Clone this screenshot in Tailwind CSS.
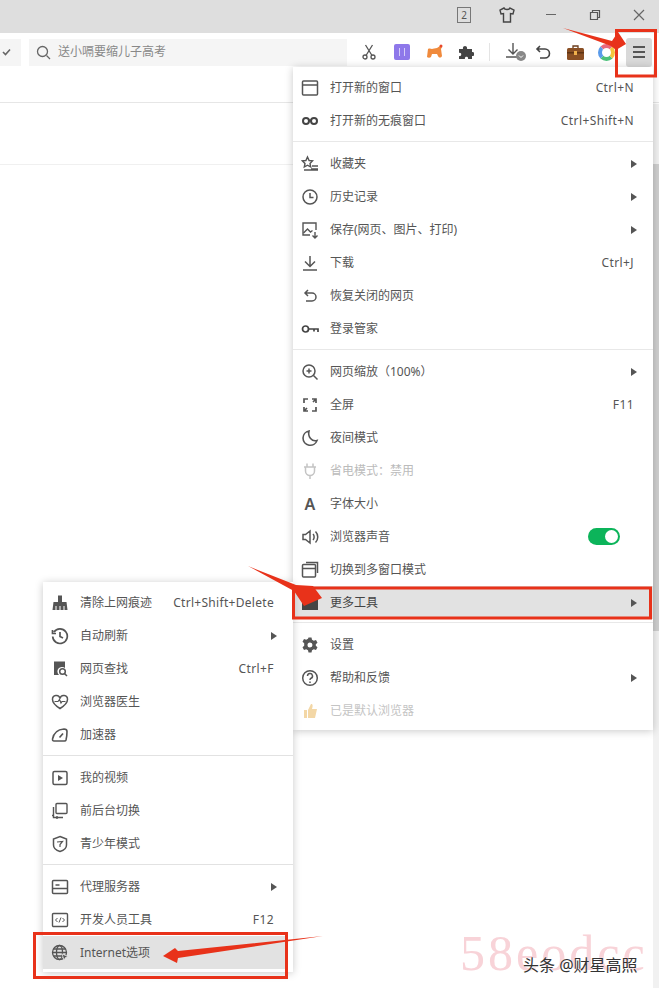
<!DOCTYPE html>
<html lang="zh-CN">
<head>
    <meta charset="UTF-8">
    <meta name="viewport" content="width=device-width, initial-scale=1.0">
    <title>浏览器菜单</title>
    <script src="https://cdn.jsdelivr.net/npm/@tailwindcss/browser@4"></script>
</head>
<body class="bg-white font-['Noto_Sans','Noto_Sans_CJK_SC',sans-serif] text-[12px] text-[#555]">
<div class="relative w-[659px] h-[988px] overflow-hidden">

    <!-- title bar -->
    <header class="h-[33px] bg-[#dedede] flex items-center justify-end pb-[4px] text-[#555]">
        <div class="w-[14px] h-[16px] border border-[#777] text-[10px] leading-[14px] text-center mr-[27px]">2</div>
        <svg class="w-[18px] h-[18px] mr-[30px]" viewBox="0 0 18 18" fill="none" stroke="#444" stroke-width="1.4"><path d="M6 2 2 4l1 4 2.500-.5V16h7V7.500L15 8l1-4-4-2c-.5 2-5.500 2-6 0z"/></svg>
        <div class="w-[10px] h-[1.500px] bg-[#666] mr-[33px]"></div>
        <svg class="w-[12px] h-[12px] mr-[32px]" viewBox="0 0 12 12" fill="none" stroke="#555" stroke-width="1.200"><path d="M1.500 3.500h7v7h-7zM3.500 3.500v-2h7v7h-2"/></svg>
        <svg class="w-[12px] h-[12px] mr-[14px]" viewBox="0 0 12 12" fill="none" stroke="#666" stroke-width="1.200"><path d="m1 1 10 10M11 1 1 11"/></svg>
    </header>

    <!-- toolbar -->
    <div class="h-[37px] flex items-center pt-[1px]">
        <div class="w-[21px] h-[27px] bg-[#f5f5f5] flex items-center justify-end pr-[10px]">
            <svg class="w-[9px] h-[8px]" viewBox="0 0 9 8" fill="none" stroke="#666" stroke-width="1.600"><path d="m1 4 2.500 2.500L8 1.500"/></svg>
        </div>
        <div class="ml-[8px] w-[318px] h-[27px] bg-[#f5f5f5] flex items-center pl-[7px] text-[#888]">
            <svg class="w-[15px] h-[15px] mr-[7px]" viewBox="0 0 15 15" fill="none" stroke="#666" stroke-width="1.300"><circle cx="6.500" cy="6.500" r="5"/><path d="m10.500 10.500 3.500 3.500"/></svg>
            送小嗝要缩儿子高考
        </div>
        <svg class="ml-[14px] w-[16px] h-[16px]" viewBox="0 0 16 16" fill="none" stroke="#555" stroke-width="1.300"><circle cx="4" cy="13" r="2"/><circle cx="12" cy="13" r="2"/><path d="M5 11.500 11.500 1M11 11.500 4.500 1"/></svg>
        <div class="ml-[17px] w-[16px] h-[16px] rounded-[2px] bg-[#8e78ea] flex items-center justify-center">
            <div class="w-[6px] h-[8px] border-x border-[#d5cdf8]"></div>
        </div>
        <svg class="ml-[16px] w-[17px] h-[16px]" viewBox="0 0 17 16"><path d="M1 13 2 5c2-1 3 0 4 0s3-1 5-1l3-2 2 1-1 2 1 7c-1 2-3 2-4 0l-1-2H6l-1 3c-1 1-3 1-4 0z" fill="#f08a3c"/><circle cx="15" cy="2" r="1.500" fill="#e8482c"/></svg>
        <svg class="ml-[15px] w-[16px] h-[16px]" viewBox="0 0 16 16"><path d="M1 5h4c-1-4 5-4 4 0h5v3c3-1 3 5 0 4v3h-4c1-3-4-3-3 0H1v-3c3 1 3-4 0-3z" fill="#444"/></svg>
        <div class="ml-[15px] w-px h-[18px] bg-[#e4e4e4]"></div>
        <svg class="ml-[15px] w-[22px] h-[20px]" viewBox="0 0 22 20" fill="none" stroke="#555" stroke-width="1.400"><path d="M8 1v11M3.500 7.500 8 12l4.500-4.500M1 15h11"/><circle cx="16" cy="14" r="5" fill="#888" stroke="none"/><path d="m14 13.500 2 2 2-2" stroke="#fff" stroke-width="1"/></svg>
        <svg class="ml-[8px] w-[16px] h-[14px]" viewBox="0 0 16 14" fill="none" stroke="#444" stroke-width="1.600"><path d="M5 1 2 4l3 3M2 4h8a4 4 0 0 1 0 9H5"/></svg>
        <svg class="ml-[16px] w-[17px] h-[15px]" viewBox="0 0 17 15"><path d="M6 3V1h5v2" fill="none" stroke="#6b3d1c" stroke-width="1.300"/><rect y="3" width="17" height="12" rx="1.500" fill="#8a4f24"/><rect y="7" width="17" height="1.500" fill="#5f3414"/><rect x="7" y="6" width="3" height="4" fill="#f0b04c"/></svg>
        <div class="ml-[14px] w-[17px] h-[17px] rounded-full border-[4px] border-t-[#e9677e] border-r-[#f4c63c] border-b-[#4cc17a] border-l-[#5a9bea]"></div>
        <div class="ml-[11px] w-[26px] h-[29px] rounded-[3px] bg-[#d9d9d9] flex flex-col items-center justify-center gap-[3px]">
            <div class="w-[12px] h-[2px] bg-[#555]"></div>
            <div class="w-[12px] h-[2px] bg-[#555]"></div>
            <div class="w-[12px] h-[2px] bg-[#555]"></div>
        </div>
    </div>

    <!-- page behind the menus -->
    <div class="h-[33px] border-b border-[#e6e6e6]"></div>
    <div class="h-[62px] border-b border-[#f0f0f0]"></div>

    <!-- scrollbar -->
    <div class="absolute right-0 top-[104px] bottom-0 w-[6px] bg-[#f1f1f1]">
        <div class="mt-[60px] h-[467px] bg-[#cfcfcf]"></div>
    </div>

    <!-- main menu -->
    <div class="absolute left-[293px] top-[67px] w-[360px] h-[663px] bg-white pt-[4px] shadow-[0_1px_8px_rgba(0,0,0,0.22)]">
        <div class="h-[33px] flex items-center pl-[8px] pr-[19px]">
            <svg class="w-[18px] h-[18px] mr-[11px]" viewBox="0 0 18 18" fill="none" stroke="#555" stroke-width="1.500"><rect x="1.500" y="2" width="15" height="14" rx="1"/><path d="M1.500 6h15"/></svg>
            <span>打开新的窗口</span><span class="ml-auto tracking-[0.4px]">Ctrl+N</span>
        </div>
        <div class="h-[33px] flex items-center pl-[8px] pr-[19px]">
            <svg class="w-[18px] h-[18px] mr-[11px]" viewBox="0 0 18 18" fill="none" stroke="#444" stroke-width="2"><circle cx="5" cy="9" r="3"/><circle cx="13" cy="9" r="3"/><path d="M8 8.500h2"/></svg>
            <span>打开新的无痕窗口</span><span class="ml-auto tracking-[0.4px]">Ctrl+Shift+N</span>
        </div>
        <div class="mt-[4px] mb-[5px] h-px bg-[#e8e8e8]"></div>

        <div class="h-[33px] flex items-center pl-[8px] pr-[19px]">
            <svg class="w-[18px] h-[18px] mr-[11px]" viewBox="0 0 18 18" fill="none" stroke="#555" stroke-width="1.400"><path d="m6.500 2 1.600 3.500 3.400.4-2.500 2.500.7 3.600-3.200-1.800-3.200 1.800.7-3.600L1.500 5.900l3.400-.4zM11 11h6M10 14h7M3 15h14"/></svg>
            <span>收藏夹</span>
            <svg class="ml-auto w-[6px] h-[8px] mr-[-3px]" viewBox="0 0 6 8"><path d="M0 0l6 4-6 4z" fill="#555"/></svg>
        </div>
        <div class="h-[33px] flex items-center pl-[8px] pr-[19px]">
            <svg class="w-[18px] h-[18px] mr-[11px]" viewBox="0 0 18 18" fill="none" stroke="#555" stroke-width="1.500"><circle cx="9" cy="9" r="7"/><path d="M9 5v4.500h3.500"/></svg>
            <span>历史记录</span>
            <svg class="ml-auto w-[6px] h-[8px] mr-[-3px]" viewBox="0 0 6 8"><path d="M0 0l6 4-6 4z" fill="#555"/></svg>
        </div>
        <div class="h-[33px] flex items-center pl-[8px] pr-[19px]">
            <svg class="w-[18px] h-[18px] mr-[11px]" viewBox="0 0 18 18" fill="none" stroke="#555" stroke-width="1.400"><path d="M9 14H2V2h13v7"/><path d="m2.500 12 4-4 3 3 2-1.500"/><path d="M14 11v6M11.500 14.500 14 17l2.500-2.500"/></svg>
            <span>保存(网页、图片、打印)</span>
            <svg class="ml-auto w-[6px] h-[8px] mr-[-3px]" viewBox="0 0 6 8"><path d="M0 0l6 4-6 4z" fill="#555"/></svg>
        </div>
        <div class="h-[33px] flex items-center pl-[8px] pr-[19px]">
            <svg class="w-[18px] h-[18px] mr-[11px]" viewBox="0 0 18 18" fill="none" stroke="#555" stroke-width="1.500"><path d="M9 2v10M4 7.500 9 12.500l5-5M2 16h14"/></svg>
            <span>下载</span><span class="ml-auto tracking-[0.4px]">Ctrl+J</span>
        </div>
        <div class="h-[33px] flex items-center pl-[8px] pr-[19px]">
            <svg class="w-[18px] h-[18px] mr-[11px]" viewBox="0 0 18 18" fill="none" stroke="#555" stroke-width="1.500"><path d="M7 3 4 6l3 3M4 6h7a3.800 3.800 0 0 1 0 8H5"/></svg>
            <span>恢复关闭的网页</span>
        </div>
        <div class="h-[33px] flex items-center pl-[8px] pr-[19px]">
            <svg class="w-[18px] h-[18px] mr-[11px]" viewBox="0 0 18 18" fill="none" stroke="#444" stroke-width="1.700"><circle cx="4.500" cy="9" r="3"/><path d="M7.500 9H17v3M13 9v2.500"/></svg>
            <span>登录管家</span>
        </div>
        <div class="mt-[4px] mb-[5px] h-px bg-[#e8e8e8]"></div>

        <div class="h-[33px] flex items-center pl-[8px] pr-[19px]">
            <svg class="w-[18px] h-[18px] mr-[11px]" viewBox="0 0 18 18" fill="none" stroke="#555" stroke-width="1.500"><circle cx="8" cy="8" r="6"/><path d="m12.500 12.500 4 4M5.500 8h5M8 5.500v5"/></svg>
            <span>网页缩放（100%）</span>
            <svg class="ml-auto w-[6px] h-[8px] mr-[-3px]" viewBox="0 0 6 8"><path d="M0 0l6 4-6 4z" fill="#555"/></svg>
        </div>
        <div class="h-[33px] flex items-center pl-[8px] pr-[19px]">
            <svg class="w-[18px] h-[18px] mr-[11px]" viewBox="0 0 18 18" fill="none" stroke="#555" stroke-width="1.700"><path d="M3 7V3h4M11 3h4v4M15 11v4h-4M7 15H3v-4M12 6l2.500-2.500M6 12l-2.500 2.500"/></svg>
            <span>全屏</span><span class="ml-auto tracking-[0.4px]">F11</span>
        </div>
        <div class="h-[33px] flex items-center pl-[8px] pr-[19px]">
            <svg class="w-[18px] h-[18px] mr-[11px]" viewBox="0 0 18 18" fill="none" stroke="#555" stroke-width="1.600"><path d="M8 2a7.200 7.200 0 1 0 8 9.500C11 13 6.500 8 8 2z"/></svg>
            <span>夜间模式</span>
        </div>
        <div class="h-[33px] flex items-center pl-[8px] pr-[19px] text-[#bbb]">
            <svg class="w-[18px] h-[18px] mr-[11px]" viewBox="0 0 18 18" fill="none" stroke="#c4c4c4" stroke-width="1.500"><path d="M3 5h12M6 1.500V5M12 1.500V5M4.500 5v4a4.500 4.500 0 0 0 9 0V5M9 13.500V17"/></svg>
            <span>省电模式：禁用</span>
        </div>
        <div class="h-[33px] flex items-center pl-[8px] pr-[19px]">
            <span class="w-[18px] mr-[11px] text-center text-[16px] font-semibold leading-none">A</span>
            <span>字体大小</span>
        </div>
        <div class="h-[33px] flex items-center pl-[8px] pr-[19px]">
            <svg class="w-[18px] h-[18px] mr-[11px]" viewBox="0 0 18 18" fill="none" stroke="#555" stroke-width="1.500"><path d="M2 6.500v5h2.500L9 15V3L4.500 6.500zM12 6c1.500 1.500 1.500 4.500 0 6M14.500 3.500c3 3 3 8 0 11"/></svg>
            <span>浏览器声音</span>
            <div class="ml-auto mr-[14px] w-[32px] h-[17px] rounded-full bg-[#0cb45a] flex items-center justify-end pr-[2px]">
                <div class="w-[13px] h-[13px] rounded-full bg-white"></div>
            </div>
        </div>
        <div class="h-[33px] flex items-center pl-[8px] pr-[19px]">
            <svg class="w-[18px] h-[18px] mr-[11px]" viewBox="0 0 18 18" fill="none" stroke="#555" stroke-width="1.500"><rect x="1.500" y="3.500" width="13" height="12.500" rx="1"/><path d="M1.500 7.500h13M5 1.500h11.500V12"/></svg>
            <span>切换到多窗口模式</span>
        </div>
        <div class="h-[33px] flex items-center pl-[8px] pr-[19px] bg-[#e2e2e2] text-[#444]">
            <svg class="w-[18px] h-[18px] mr-[11px]" viewBox="0 0 18 18"><path d="M1 3h6l2 2h8v11H1z" fill="#444"/></svg>
            <span>更多工具</span>
            <svg class="ml-auto w-[6px] h-[8px] mr-[-3px]" viewBox="0 0 6 8"><path d="M0 0l6 4-6 4z" fill="#555"/></svg>
        </div>
        <div class="mt-[3px] mb-[5px] h-px bg-[#e8e8e8]"></div>

        <div class="h-[33px] flex items-center pl-[8px] pr-[19px]">
            <svg class="w-[18px] h-[18px] mr-[11px]" viewBox="0 0 18 18"><path fill-rule="evenodd" d="m7.500 1.500h3l.5 2.300 1.800 1 2.200-.7 1.500 2.600-1.700 1.600v1.400l1.700 1.600-1.500 2.600-2.200-.7-1.800 1-.5 2.300h-3l-.5-2.300-1.800-1-2.200.7-1.500-2.600 1.700-1.600V7.300L1.500 5.700 3 3.100l2.200.7 1.800-1zM9 6.500a2.500 2.500 0 1 0 0 5 2.500 2.500 0 0 0 0-5z" fill="#555"/></svg>
            <span>设置</span>
        </div>
        <div class="h-[33px] flex items-center pl-[8px] pr-[19px]">
            <svg class="w-[18px] h-[18px] mr-[11px]" viewBox="0 0 18 18" fill="none" stroke="#555" stroke-width="1.500"><circle cx="9" cy="9" r="7.300"/><path d="M6.500 7a2.500 2.500 0 1 1 3.500 2.300c-.7.300-1 .8-1 1.700M9 12.500v1.500"/></svg>
            <span>帮助和反馈</span>
            <svg class="ml-auto w-[6px] h-[8px] mr-[-3px]" viewBox="0 0 6 8"><path d="M0 0l6 4-6 4z" fill="#555"/></svg>
        </div>
        <div class="h-[33px] flex items-center pl-[8px] pr-[19px] text-[#c4c4c4]">
            <svg class="w-[18px] h-[18px] mr-[11px]" viewBox="0 0 18 18"><path d="M3 8h3v8H3zM7 8l3-6c2 0 2 2 1 5h5l-2 9H7z" fill="#f3d7a6"/></svg>
            <span>已是默认浏览器</span>
        </div>
    </div>

    <!-- sub menu -->
    <div class="absolute left-[43px] top-[582px] w-[250px] h-[390px] bg-white pt-[4px] shadow-[0_1px_8px_rgba(0,0,0,0.22)]">
        <div class="h-[33px] flex items-center pl-[8px] pr-[19px]">
            <svg class="w-[18px] h-[18px] mr-[11px]" viewBox="0 0 18 18"><path d="M7 1.500h4V8h4.500l1 8h-15l1-8H7z" fill="#555"/><path d="M5 12v4M9 12v4M13 12v4" stroke="#fff" stroke-width="1"/></svg>
            <span>清除上网痕迹</span><span class="ml-auto tracking-[0.3px]">Ctrl+Shift+Delete</span>
        </div>
        <div class="h-[33px] flex items-center pl-[8px] pr-[19px]">
            <svg class="w-[18px] h-[18px] mr-[11px]" viewBox="0 0 18 18" fill="none" stroke="#555" stroke-width="1.700"><path d="M3 5a7.300 7.300 0 1 1-1.300 4.500M1.500 3v3.500H5M9 5v4.500l3 1.500"/></svg>
            <span>自动刷新</span>
            <svg class="ml-auto w-[6px] h-[8px] mr-[-3px]" viewBox="0 0 6 8"><path d="M0 0l6 4-6 4z" fill="#555"/></svg>
        </div>
        <div class="h-[33px] flex items-center pl-[8px] pr-[19px]">
            <svg class="w-[18px] h-[18px] mr-[11px]" viewBox="0 0 18 18"><path d="M3 1.500h11V8a4.500 4.500 0 0 0-6 7H3z" fill="#555"/><circle cx="11.500" cy="11.500" r="2.800" fill="none" stroke="#555" stroke-width="1.500"/><path d="m13.500 13.500 2.500 2.500" stroke="#555" stroke-width="1.500"/></svg>
            <span>网页查找</span><span class="ml-auto tracking-[0.4px]">Ctrl+F</span>
        </div>
        <div class="h-[33px] flex items-center pl-[8px] pr-[19px]">
            <svg class="w-[18px] h-[18px] mr-[11px]" viewBox="0 0 18 18" fill="none" stroke="#555" stroke-width="1.500"><path d="M9 15.500C5 13 1.500 10 1.500 6.500a3.800 3.800 0 0 1 7.500-1 3.800 3.800 0 0 1 7.500 1C16.500 10 13 13 9 15.500z"/><path d="M3.500 8.500H7l1.500-2 1.500 3.500 1-1.500h3.500" stroke-width="1.200"/></svg>
            <span>浏览器医生</span>
        </div>
        <div class="h-[33px] flex items-center pl-[8px] pr-[19px]">
            <svg class="w-[18px] h-[18px] mr-[11px]" viewBox="0 0 18 18" fill="none" stroke="#555" stroke-width="1.600"><path d="M3 15a1.500 1.500 0 0 1-1.500-1.800C2.500 7.500 6.500 3.500 13 3c1.500 0 3 1 3 2.500 0 3.500-.5 6.500-1 8.500-.2.700-.8 1-1.500 1z"/><path d="m8.500 11.500 3.500-4"/></svg>
            <span>加速器</span>
        </div>
        <div class="mt-[4px] mb-[5px] h-px bg-[#e2e2e2]"></div>

        <div class="h-[33px] flex items-center pl-[8px] pr-[19px]">
            <svg class="w-[18px] h-[18px] mr-[11px]" viewBox="0 0 18 18"><rect x="2" y="2.500" width="14" height="13" rx="1.500" fill="none" stroke="#555" stroke-width="1.500"/><path d="M7 6l5 3-5 3z" fill="#555"/></svg>
            <span>我的视频</span>
        </div>
        <div class="h-[33px] flex items-center pl-[8px] pr-[19px]">
            <svg class="w-[18px] h-[18px] mr-[11px]" viewBox="0 0 18 18" fill="none" stroke="#555" stroke-width="1.400"><rect x="5" y="1.500" width="11" height="10" rx="1"/><path d="M2.500 5v10.500H12M6 14v3M1 13.500h2"/></svg>
            <span>前后台切换</span>
        </div>
        <div class="h-[33px] flex items-center pl-[8px] pr-[19px]">
            <svg class="w-[18px] h-[18px] mr-[11px]" viewBox="0 0 18 18" fill="none" stroke="#555" stroke-width="1.500"><path d="M9 1.500 15.500 4v6c0 3-3 5.500-6.500 6.500C5.500 15.500 2.500 13 2.500 10V4z"/><path d="M6 7l5.500-.5L9 9.500V12" stroke-width="1.200"/></svg>
            <span>青少年模式</span>
        </div>
        <div class="mt-[4px] mb-[5px] h-px bg-[#e2e2e2]"></div>

        <div class="h-[33px] flex items-center pl-[8px] pr-[19px]">
            <svg class="w-[18px] h-[18px] mr-[11px]" viewBox="0 0 18 18" fill="none" stroke="#555" stroke-width="1.500"><rect x="1.500" y="2.500" width="15" height="13" rx="1"/><path d="M1.500 10.500h15M4.500 7h4"/></svg>
            <span>代理服务器</span>
            <svg class="ml-auto w-[6px] h-[8px] mr-[-3px]" viewBox="0 0 6 8"><path d="M0 0l6 4-6 4z" fill="#555"/></svg>
        </div>
        <div class="h-[33px] flex items-center pl-[8px] pr-[19px]">
            <svg class="w-[18px] h-[18px] mr-[11px]" viewBox="0 0 18 18" fill="none" stroke="#555" stroke-width="1.400"><rect x="1.500" y="2.500" width="15" height="13" rx="1"/><path d="M6.500 7 4.500 9l2 2M11.500 7l2 2-2 2M10 6.500l-2 5" stroke-width="1"/></svg>
            <span>开发人员工具</span><span class="ml-auto tracking-[0.4px]">F12</span>
        </div>
        <div class="w-[242px] h-[33px] flex items-center pl-[8px] bg-[#e2e2e2]">
            <svg class="w-[18px] h-[18px] mr-[11px]" viewBox="0 0 18 18" fill="none" stroke="#555" stroke-width="1.300"><circle cx="8.500" cy="8.500" r="7"/><ellipse cx="8.500" cy="8.500" rx="3" ry="7"/><path d="M1.500 8.500h14M2.500 5h12M2.500 12h12"/><path d="m11 10 6 2.500-2.500 1L13 16z" fill="#555" stroke="#e2e2e2" stroke-width=".8"/></svg>
            <span>Internet选项</span>
        </div>
    </div>

    <!-- red marks on the screenshot -->
    <svg class="absolute inset-0 w-[659px] h-[988px] pointer-events-none" viewBox="0 0 659 988">
        <rect x="616.500" y="30.500" width="39" height="45.500" fill="none" stroke="#e8321a" stroke-width="3"/>
        <rect x="293.500" y="588" width="357" height="30" fill="none" stroke="#e8321a" stroke-width="3"/>
        <rect x="34.500" y="933.500" width="252" height="44" fill="none" stroke="#e8321a" stroke-width="3"/>
        <path d="M563 28 612 41 618 32 626 44 616 50 611 46Z" fill="#e8321a"/>
        <path d="M248 566 296 585 313 586 322 598 304 606 294 591Z" fill="#e8321a"/>
        <path d="M323 936 178 951 175 948 163 956 177 963 178 958Z" fill="#e8321a"/>
    </svg>

    <!-- watermark -->
    <div class="absolute left-[460px] top-[925px] font-['Liberation_Serif',serif] text-[50px] leading-[56px] tracking-[3px] text-[#f8d3d8]">58eodcc</div>
    <div class="absolute left-[523px] top-[954px] text-[16px] leading-[22px] text-[#333] [text-shadow:0_0_2px_#fff]">头条 @财星高照</div>
</div>
</body>
</html>
